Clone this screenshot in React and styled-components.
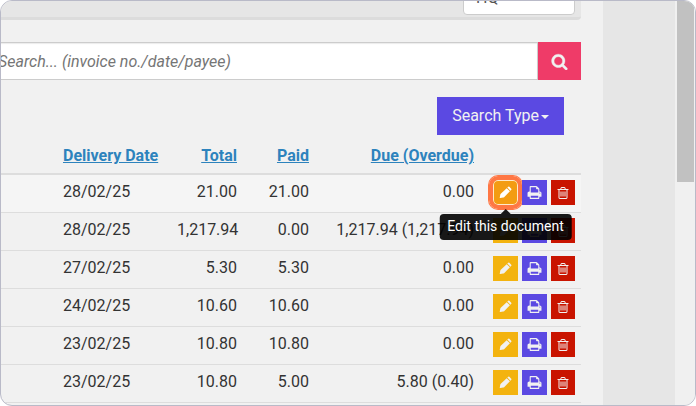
import { useState } from 'react';
import styled, { createGlobalStyle, css } from 'styled-components';

const GlobalStyle = createGlobalStyle`
  * {
    box-sizing: border-box;
  }

  body {
    margin: 0;
    background: #fff;
    color: #333;
    font-family: Roboto, sans-serif;
    font-size: 16px;
    line-height: 24px;
  }

  button, input, select {
    font: inherit;
  }
`;

const Frame = styled.div`
  display: flex;
  height: 100vh;
  overflow: hidden;
  border: 1px solid #b9bac8;
  border-radius: 12px;
  background: #f1f1f1;
`;

const Panel = styled.main`
  flex: 1;
  min-width: 0;
  margin-left: -16px;
  padding-right: 22px;
`;

const Gutter = styled.div`
  width: 72px;
  background: #e6e6e6;
`;

const ScrollTrack = styled.div`
  width: 20px;
  padding: 0 1px 0 2px;
  background: #f0f0f0;
`;

const ScrollThumb = styled.div`
  height: 181px;
  background: #c1c1c1;
`;

const TopBar = styled.div`
  display: flex;
  justify-content: flex-end;
  align-items: flex-end;
  height: 19px;
  padding: 0 6px 2px 0;
  overflow: hidden;
  background: #e6e6e6;
  border-bottom: 3px solid #dcdcdc;
  border-radius: 0 0 4px 0;
`;

const BranchSelect = styled.select`
  flex: none;
  width: 112px;
  height: 34px;
  padding: 0 12px;
  appearance: none;
  color: #555;
  background: #fff;
  border: 1px solid #ccc;
  border-radius: 4px;
`;

const SearchForm = styled.form`
  display: flex;
  margin-top: 22px;
`;

const SearchInput = styled.input`
  flex: 1;
  min-width: 0;
  height: 38px;
  padding: 0 12px;
  color: #555;
  background: #fff;
  border: 1px solid #ccc;
  border-radius: 0;
  box-shadow: inset 0 1px 1px rgba(0, 0, 0, 0.08);

  &::placeholder {
    color: #757575;
    font-style: italic;
  }
`;

const SearchButton = styled.button`
  display: flex;
  align-items: center;
  justify-content: center;
  width: 43px;
  padding: 0;
  color: #f1f1f1;
  background: #ef3b68;
  border: 0;
`;

const Toolbar = styled.div`
  display: flex;
  justify-content: flex-end;
  padding: 17px 17px 0 0;
`;

const TypeButton = styled.button`
  display: flex;
  align-items: center;
  gap: 2px;
  height: 38px;
  padding: 0 15px;
  color: #f1f1f1;
  background: #5b49e2;
  border: 0;
`;

const Caret = styled.span`
  margin-top: 2px;
  border-top: 4px solid;
  border-left: 4px solid transparent;
  border-right: 4px solid transparent;
`;

const Table = styled.table`
  width: 100%;
  table-layout: fixed;
  border-collapse: separate;
  border-spacing: 0;
`;

const HeadCell = styled.th`
  width: ${({ $width }) => $width || 'auto'};
  height: 40px;
  padding: ${({ $first }) => ($first ? '4px 8px 0 78px' : '4px 8px 0')};
  text-align: ${({ $first }) => ($first ? 'left' : 'right')};
  font-weight: 700;
  border-bottom: 2px solid #ddd;

  a {
    color: #2d83bd;
    text-decoration: underline;
  }
`;

const Row = styled.tr`
  background: ${({ $active }) => ($active ? '#f5f5f5' : 'transparent')};
`;

const Cell = styled.td`
  padding: ${({ $first }) => ($first ? '5px 8px 0 78px' : '5px 8px 0')};
  text-align: ${({ $first }) => ($first ? 'left' : 'right')};
  vertical-align: top;
  white-space: nowrap;
  border-bottom: 1px solid #ddd;
`;

const ActionCell = styled.td`
  padding: 5px 6px 7px 11px;
  border-bottom: 1px solid #ddd;
`;

const Actions = styled.div`
  display: flex;
  gap: 4px;
`;

const tones = {
  edit: '#f3b30f',
  print: '#5b49e2',
  remove: '#c91400',
};

const ActionButton = styled.button`
  position: relative;
  display: flex;
  align-items: center;
  justify-content: center;
  width: ${({ $tone }) => ($tone === 'remove' ? '24px' : '25px')};
  height: 25px;
  padding: 0;
  color: #f1f1f1;
  background: ${({ $tone }) => tones[$tone]};
  border: 0;

  ${({ $active }) =>
    $active &&
    css`
      color: #fff;
      background: #f39c12;
      box-shadow: inset 0 0 0 1px #d58a10;

      &::before {
        content: '';
        position: absolute;
        inset: -4px;
        border: 4px solid #ff7744;
        border-radius: 9px;
        box-shadow: inset 0 0 0 1px #ffe9c9, 0 0 0 1px #ff7744;
      }
    `}
`;

const Tooltip = styled.span`
  position: absolute;
  z-index: 2;
  top: 34px;
  left: 50%;
  transform: translateX(-50%);
  padding: 2px 8px 4px;
  color: #fff;
  font-size: 14px;
  line-height: 20px;
  white-space: nowrap;
  background: rgba(0, 0, 0, 0.9);
  border-radius: 4px;

  &::before {
    content: '';
    position: absolute;
    bottom: 100%;
    left: 50%;
    margin-left: -5px;
    border: 5px solid transparent;
    border-top: 0;
    border-bottom-color: rgba(0, 0, 0, 0.9);
  }
`;

const icons = {
  search:
    'M1216 832q0-185-131.5-316.5t-316.5-131.5-316.5 131.5-131.5 316.5 131.5 316.5 316.5 131.5 316.5-131.5 131.5-316.5zm512 832q0 52-38 90t-90 38q-54 0-90-38l-343-342q-179 124-399 124-143 0-273.5-55.5t-225-150-150-225-55.5-273.5 55.5-273.5 150-225 225-150 273.5-55.5 273.5 55.5 225 150 150 225 55.5 273.5q0 220-124 399l343 343q37 37 37 90z',
  edit:
    'M1190 230q80-80 170-10l220 220q70 90-10 170l-80 80-380-380zM1040 380l380 380-690 690q-50 45-110 55l-350 60q-70 5-60-60l60-350q10-60 60-110z',
  print:
    'M448 1536h896v-256h-896v256zm0-640h896v-384h-160q-40 0-68-28t-28-68v-160h-640v640zm1152 64q0-26-19-45t-45-19-45 19-19 45 19 45 45 19 45-19 19-45zm128 0v416q0 13-9.5 22.5t-22.5 9.5h-224v160q0 40-28 68t-68 28h-960q-40 0-68-28t-28-68v-160h-224q-13 0-22.5-9.5t-9.5-22.5v-416q0-79 56.5-135.5t135.5-56.5h64v-544q0-40 28-68t68-28h672q40 0 88 20t76 48l152 152q28 28 48 76t20 88v256h64q79 0 135.5 56.5t56.5 135.5z',
  remove:
    'M704 736v576q0 14-9 23t-23 9h-64q-14 0-23-9t-9-23v-576q0-14 9-23t23-9h64q14 0 23 9t9 23zm256 0v576q0 14-9 23t-23 9h-64q-14 0-23-9t-9-23v-576q0-14 9-23t23-9h64q14 0 23 9t9 23zm256 0v576q0 14-9 23t-23 9h-64q-14 0-23-9t-9-23v-576q0-14 9-23t23-9h64q14 0 23 9t9 23zm128 724v-948h-896v948q0 22 7 40.5t14.5 27 10.5 8.5h832q3 0 10.5-8.5t14.5-27 7-40.5zm-672-1076h448l-48-117q-7-9-17-11h-317q-10 2-17 11zm928 32v64q0 14-9 23t-23 9h-96v948q0 83-47 143.5t-113 60.5h-832q-66 0-113-58.5t-47-141.5v-952h-96q-14 0-23-9t-9-23v-64q0-14 9-23t23-9h309l70-167q15-37 54-63t79-26h320q40 0 79 26t54 63l70 167h309q14 0 23 9t9 23z',
};

function Icon({ name, size = 15, stroke = 0 }) {
  return (
    <svg
      width={size}
      height={size}
      viewBox="0 0 1792 1792"
      fill="currentColor"
      stroke="currentColor"
      strokeWidth={stroke}
      aria-hidden="true"
    >
      <path d={icons[name]} />
    </svg>
  );
}

const columns = [
  { label: 'Delivery Date' },
  { label: 'Total', width: '76px' },
  { label: 'Paid', width: '72px' },
  { label: 'Due (Overdue)', width: '165px' },
];

const invoices = [
  ['28/02/25', '21.00', '21.00', '0.00'],
  ['28/02/25', '1,217.94', '0.00', '1,217.94 (1,217.94)'],
  ['27/02/25', '5.30', '5.30', '0.00'],
  ['24/02/25', '10.60', '10.60', '0.00'],
  ['23/02/25', '10.80', '10.80', '0.00'],
  ['23/02/25', '10.80', '5.00', '5.80 (0.40)'],
];

export default function App() {
  const [query, setQuery] = useState('');
  const activeRow = 0;

  return (
    <>
      <GlobalStyle />
      <Frame>
        <Panel>
          <TopBar>
            <BranchSelect aria-label="Branch">
              <option>HQ</option>
            </BranchSelect>
          </TopBar>

          <SearchForm onSubmit={(e) => e.preventDefault()}>
            <SearchInput
              aria-label="Search invoices"
              placeholder="Search... (invoice no./date/payee)"
              value={query}
              onChange={(e) => setQuery(e.target.value)}
            />
            <SearchButton aria-label="Search">
              <Icon name="search" size={17} stroke={40} />
            </SearchButton>
          </SearchForm>

          <Toolbar>
            <TypeButton type="button">
              Search Type
              <Caret />
            </TypeButton>
          </Toolbar>

          <Table>
            <thead>
              <tr>
                {columns.map((col, i) => (
                  <HeadCell key={col.label} $first={i === 0} $width={col.width}>
                    <a href="#sort">{col.label}</a>
                  </HeadCell>
                ))}
                <HeadCell $width="99px" aria-label="Actions" />
              </tr>
            </thead>
            <tbody>
              {invoices.map((invoice, r) => (
                <Row key={r} $active={r === activeRow}>
                  {invoice.map((value, i) => (
                    <Cell key={i} $first={i === 0}>{value}</Cell>
                  ))}
                  <ActionCell>
                    <Actions>
                      <ActionButton type="button" aria-label="Edit" $tone="edit" $active={r === activeRow}>
                        <Icon name="edit" />
                        {r === activeRow && <Tooltip role="tooltip">Edit this document</Tooltip>}
                      </ActionButton>
                      <ActionButton type="button" aria-label="Print" $tone="print">
                        <Icon name="print" />
                      </ActionButton>
                      <ActionButton type="button" aria-label="Delete" $tone="remove">
                        <Icon name="remove" size={14} />
                      </ActionButton>
                    </Actions>
                  </ActionCell>
                </Row>
              ))}
            </tbody>
          </Table>
        </Panel>
        <Gutter />
        <ScrollTrack>
          <ScrollThumb />
        </ScrollTrack>
      </Frame>
    </>
  );
}
